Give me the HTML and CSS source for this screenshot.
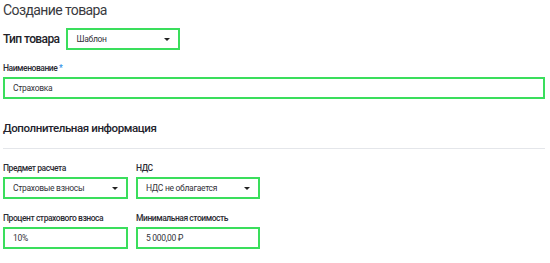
FILE: index.html
```html
<!DOCTYPE html>
<html lang="ru">
<head>
  <meta charset="UTF-8">
  <title>Создание товара</title>
  <link rel="stylesheet" href="styles.css">
</head>
<body>
  <div class="page">
    <h1 class="title">Создание товара</h1>

    <div class="type-row">
      <span class="type-label">Тип товара</span>
      <div class="box select type-select">
        <span>Шаблон</span>
        <span class="arrow"></span>
      </div>
    </div>

    <div class="field name-field">
      <label class="label">Наименование <span class="req">*</span></label>
      <div class="box">Страховка</div>
    </div>

    <h2 class="section">Дополнительная информация</h2>
    <div class="divider"></div>

    <div class="grid">
      <div class="field">
        <label class="label">Предмет расчета</label>
        <div class="box select">
          <span>Страховые взносы</span>
          <span class="arrow"></span>
        </div>
      </div>
      <div class="field">
        <label class="label">НДС</label>
        <div class="box select">
          <span>НДС не облагается</span>
          <span class="arrow"></span>
        </div>
      </div>
      <div class="field">
        <label class="label">Процент страхового взноса</label>
        <div class="box">10%</div>
      </div>
      <div class="field">
        <label class="label">Минимальная стоимость</label>
        <div class="box">5 000,00 ₽</div>
      </div>
    </div>
  </div>
</body>
</html>
```

FILE: styles.css
```css
body {
  margin: 0;
  font-family: Roboto, "Noto Sans", sans-serif;
  color: #2b2b33;
  background: #ffffff;
}

.page {
  width: 542px;
  padding: 0 3px;
}

.title {
  margin: 0;
  font-size: 14px;
  font-weight: 400;
  letter-spacing: -0.6px;
  line-height: 20px;
  color: #3a3a40;
}

.type-row {
  display: flex;
  align-items: center;
  gap: 7px;
  margin-top: 8px;
}

.type-label {
  font-size: 12px;
  font-weight: 500;
  letter-spacing: -0.6px;
  color: #222228;
}

.box {
  box-sizing: border-box;
  height: 22px;
  border: 2px solid #3ade5c;
  padding: 0 7px 0 8px;
  display: flex;
  align-items: center;
  font-size: 8.5px;
  letter-spacing: -0.3px;
  color: #33333a;
  background: #fff;
}

.select {
  justify-content: space-between;
}

.arrow {
  width: 0;
  height: 0;
  border-left: 3px solid transparent;
  border-right: 3px solid transparent;
  border-top: 3px solid #222;
  margin-right: 1px;
}

.type-select {
  width: 114px;
}

.field {
  display: flex;
  flex-direction: column;
}

.label {
  font-size: 8.5px;
  font-weight: 500;
  letter-spacing: -0.45px;
  color: #2b2b33;
  line-height: 12px;
  margin-bottom: 3px;
}

.req {
  color: #2f8fe8;
}

.name-field {
  margin-top: 12px;
}

.section {
  margin: 22px 0 0;
  font-size: 11.5px;
  font-weight: 500;
  letter-spacing: -0.4px;
  line-height: 14px;
  color: #23232d;
}

.divider {
  height: 1px;
  background: #e4e6ea;
  margin-top: 13px;
}

.grid {
  display: grid;
  grid-template-columns: 125px 124px;
  column-gap: 8px;
  row-gap: 13px;
  margin-top: 13px;
}
```
